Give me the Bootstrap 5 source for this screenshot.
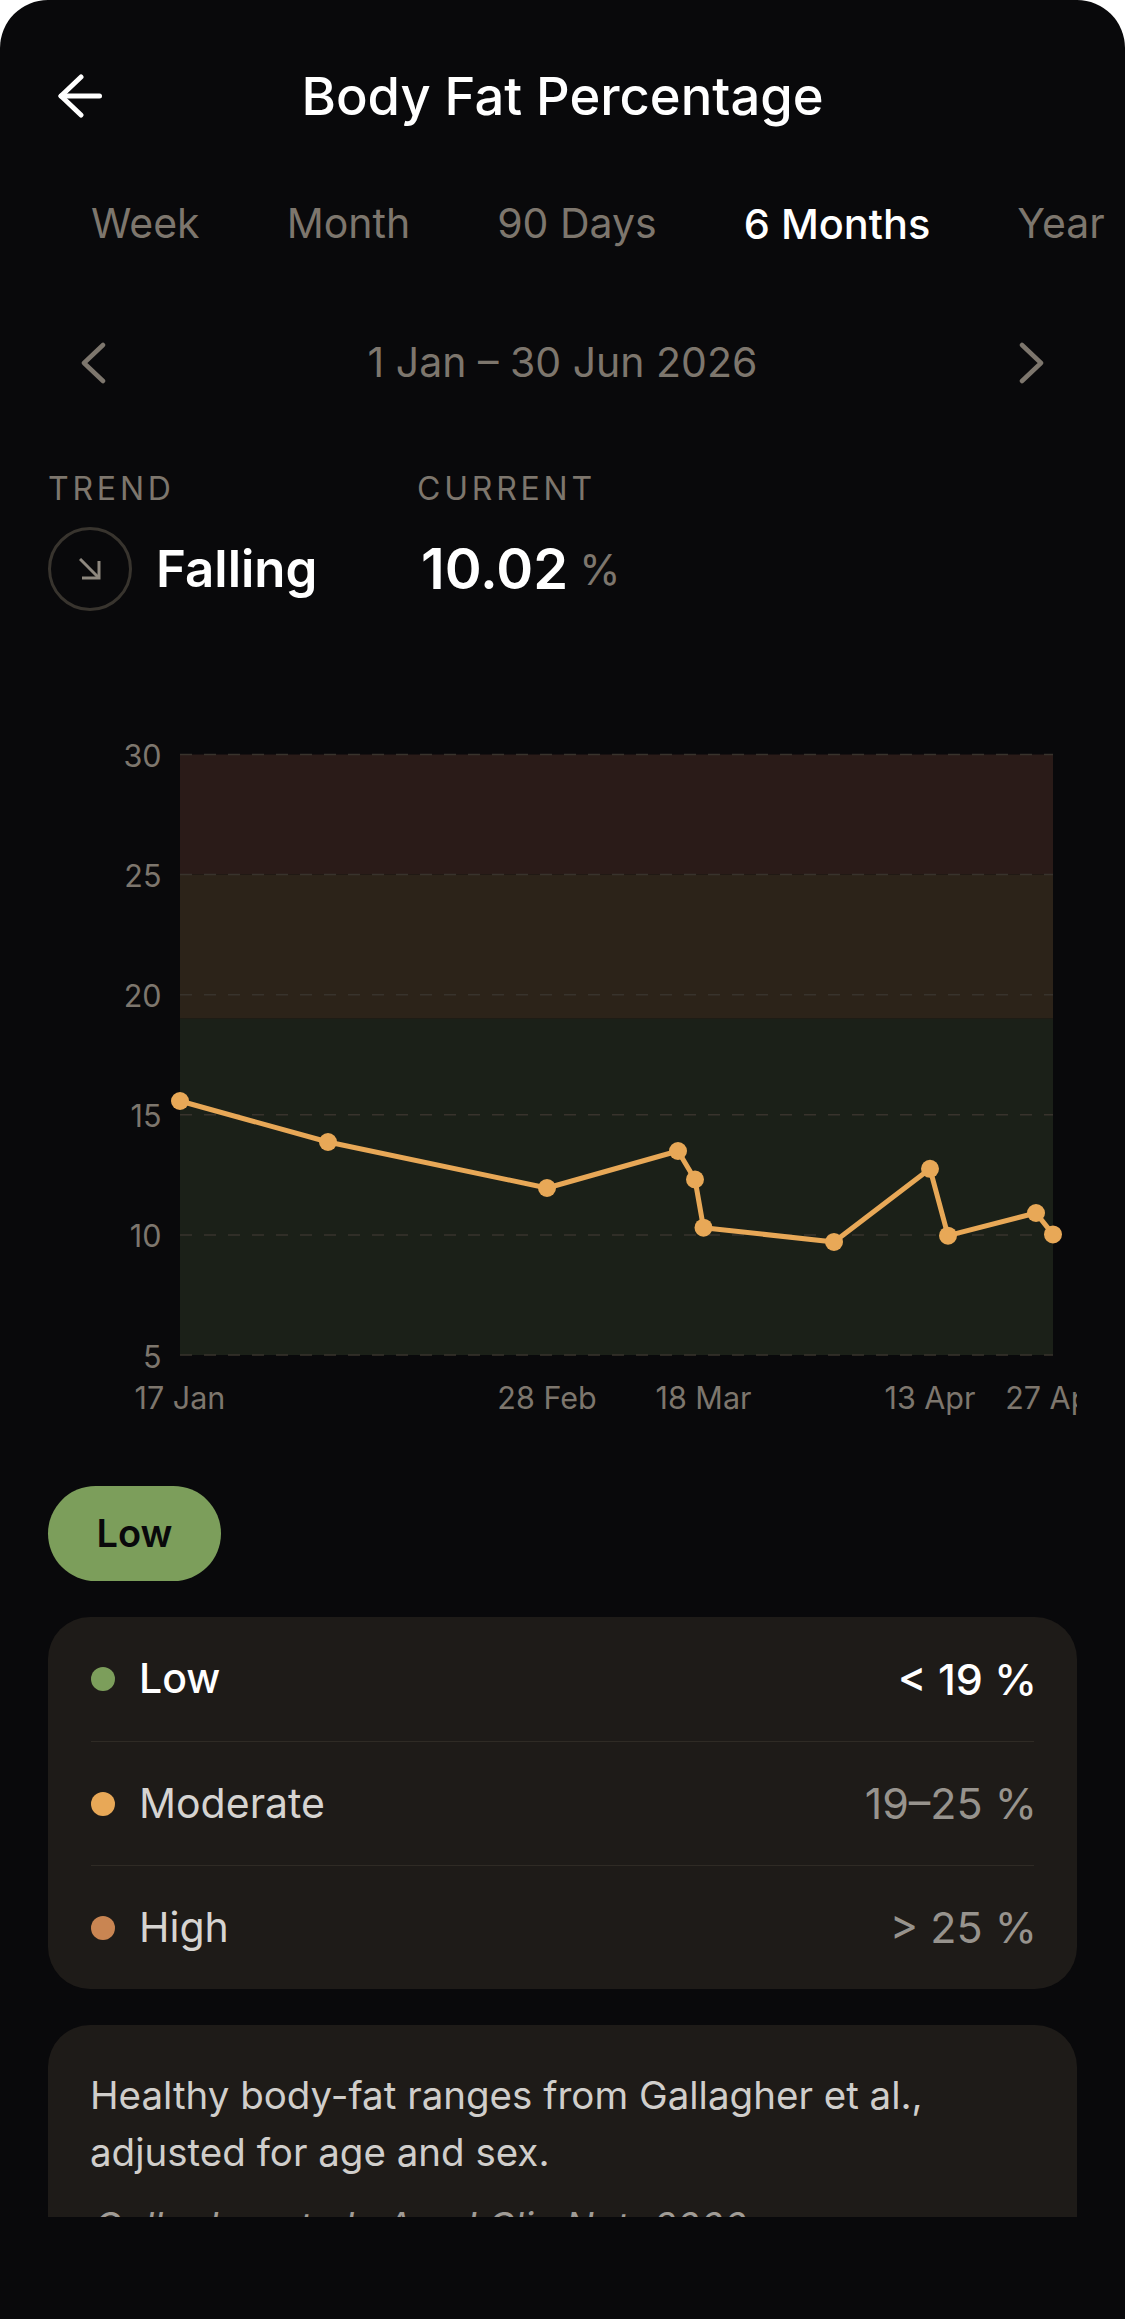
<!DOCTYPE html>
<html lang="en">
<head>
    <meta charset="UTF-8">
    <meta name="viewport" content="width=device-width, initial-scale=1.0">
    <title>Body Fat Percentage</title>
    <link href="https://cdn.jsdelivr.net/npm/bootstrap@5.3.0/dist/css/bootstrap.min.css" rel="stylesheet">
    <style>
        html {
            height: 100%;
            background-color: #fff;
        }
        body {
            height: 100%;
            background-color: #09090b;
            border-radius: 48px 48px 0 0;
            font-family: "Inter", "Liberation Sans", sans-serif;
            color: #fff;
        }
        .screen {
            height: 2217px;
            overflow: hidden;
            padding: 0 48px;
        }
        .top-bar {
            height: 192px;
        }
        .back-btn {
            left: 10px;
            top: 50%;
            transform: translateY(-50%);
            line-height: 0;
        }
        .page-title {
            font-size: 52.5px;
            font-weight: 500;
            margin: 0;
        }
        .range-tabs {
            margin: 0 -48px;
            padding-left: 91px;
            gap: 87px;
            height: 64px;
            white-space: nowrap;
            overflow: hidden;
            font-size: 41px;
            color: #7d766d;
        }
        .range-tabs .active-tab {
            color: #fff;
            font-size: 41.5px;
            font-weight: 500;
        }
        .date-row {
            height: 64px;
            margin-top: 75px;
            padding: 0 32px;
            font-size: 41px;
            color: #7d766d;
        }
        .stat-row {
            margin-top: 75px;
        }
        .stat-label {
            font-size: 32px;
            letter-spacing: 3.8px;
            color: #7d766d;
            line-height: 38px;
        }
        .trend-col {
            width: 369px;
        }
        .stat-body {
            height: 84px;
            margin-top: 19px;
        }
        .trend-ring {
            width: 84px;
            height: 84px;
            border: 3px solid #38342e;
            border-radius: 50%;
        }
        .stat-value {
            font-size: 51px;
            font-weight: 600;
        }
        .stat-number {
            font-size: 56px;
            font-weight: 600;
        }
        .stat-unit {
            font-size: 42px;
            color: #7d766d;
            margin-left: 11px;
        }
        .chart-wrap {
            margin-top: 120px;
            margin-bottom: 55px;
        }
        .chart-wrap svg {
            display: block;
        }
        .chart-wrap text {
            font-family: "Inter", "Liberation Sans", sans-serif;
            font-size: 30.5px;
            fill: #7d766d;
        }
        .level-pill {
            width: 173px;
            height: 95px;
            background-color: #7c9e5b;
            color: #09090b;
            font-size: 38px;
            font-weight: 600;
            border-radius: 48px;
        }
        .info-panel {
            background-color: #1e1b18;
            border-radius: 42px;
        }
        .range-list {
            margin-top: 36px;
            padding: 0 43px;
        }
        .range-row {
            height: 124px;
            font-size: 41px;
            color: #d6d4d1;
        }
        .range-row + .range-row {
            border-top: 1px solid #2f2b25;
        }
        .range-row .range-val {
            color: #97938d;
            font-size: 43px;
            margin-right: -3px;
        }
        .range-row.on,
        .range-row.on .range-val {
            color: #fff;
            font-weight: 500;
        }
        .dot {
            width: 24px;
            height: 24px;
            border-radius: 50%;
            margin-right: 24px;
        }
        .dot-low { background-color: #7c9e5b; }
        .dot-moderate { background-color: #e8a857; }
        .dot-high { background-color: #c98552; }
        .note-panel {
            margin-top: 36px;
            padding: 42px 43px 45px 42px;
            font-size: 38.5px;
            line-height: 57px;
            color: #d0cecb;
        }
        .note-cite {
            margin: 23px 0 0 4px;
            font-size: 37.5px;
            font-style: italic;
            color: #a09c96;
            line-height: 46px;
        }
    </style>
</head>
<body>
    <div class="screen">
        <!-- Header -->
        <div class="top-bar position-relative d-flex align-items-center justify-content-center">
            <span class="back-btn position-absolute">
                <svg width="44" height="44" viewBox="0 0 44 44" fill="none" stroke="#fff" stroke-width="5" stroke-linecap="round" stroke-linejoin="round"><path d="M41.5 22H3"/><path d="M23 3 3 22 23 41"/></svg>
            </span>
            <h1 class="page-title">Body Fat Percentage</h1>
        </div>

        <!-- Range tabs -->
        <div class="range-tabs d-flex align-items-center">
            <span>Week</span>
            <span>Month</span>
            <span>90 Days</span>
            <span class="active-tab">6 Months</span>
            <span>Year</span>
        </div>

        <!-- Date stepper -->
        <div class="date-row d-flex align-items-center justify-content-between">
            <svg width="26" height="42" viewBox="0 0 26 42" fill="none" stroke="#7d766d" stroke-width="4.5" stroke-linecap="round" stroke-linejoin="round"><path d="M23 3 4 21l19 18"/></svg>
            <span>1 Jan – 30 Jun 2026</span>
            <svg width="26" height="42" viewBox="0 0 26 42" fill="none" stroke="#7d766d" stroke-width="4.5" stroke-linecap="round" stroke-linejoin="round"><path d="m3 3 19 18L3 39"/></svg>
        </div>

        <!-- Trend and current value -->
        <div class="stat-row d-flex">
            <div class="trend-col">
                <div class="stat-label">TREND</div>
                <div class="stat-body d-flex align-items-center gap-4">
                    <div class="trend-ring d-flex align-items-center justify-content-center">
                        <svg width="22" height="22" viewBox="0 0 22 22" fill="none" stroke="#8e887f" stroke-width="3"><path d="M1 1 19 19"/><path d="M20 3v17H3"/></svg>
                    </div>
                    <span class="stat-value">Falling</span>
                </div>
            </div>
            <div>
                <div class="stat-label">CURRENT</div>
                <div class="stat-body d-flex align-items-center ms-1">
                    <span class="stat-number">10.02</span><span class="stat-unit">%</span>
                </div>
            </div>
        </div>

        <!-- Chart -->
        <div class="chart-wrap">
            <svg id="chart" width="1029" height="700" viewBox="48 730 1029 700"></svg>
        </div>

        <div class="level-pill d-flex align-items-center justify-content-center">Low</div>

        <!-- Ranges -->
        <div class="info-panel range-list">
            <div class="range-row on d-flex align-items-center">
                <span class="dot dot-low"></span>
                <span class="flex-grow-1">Low</span>
                <span class="range-val">&lt; 19 %</span>
            </div>
            <div class="range-row d-flex align-items-center">
                <span class="dot dot-moderate"></span>
                <span class="flex-grow-1">Moderate</span>
                <span class="range-val">19–25 %</span>
            </div>
            <div class="range-row d-flex align-items-center">
                <span class="dot dot-high"></span>
                <span class="flex-grow-1">High</span>
                <span class="range-val">&gt; 25 %</span>
            </div>
        </div>

        <!-- Source note, cut off by the bottom bar -->
        <div class="info-panel note-panel">
            Healthy body-fat ranges from Gallagher et al.,<br>adjusted for age and sex.
            <p class="note-cite">Gallagher et al., Am J Clin Nutr 2000</p>
        </div>
    </div>

    <script src="https://cdn.jsdelivr.net/npm/bootstrap@5.3.0/dist/js/bootstrap.bundle.min.js"></script>
    <script>
        // Chart coordinates are in page pixels, the svg viewBox starts at 48,730
        const left = 180, right = 1053;
        const yFor = v => 753.5 + (30 - v) * 24.02;
        const points = [[180,1100],[328,1141],[547,1187],[678,1150],[695,1178.5],[703.5,1226.7],[834,1241],[930,1167.8],[948,1234.7],[1036,1212],[1053,1233.4]];
        const xLabels = [[180,'17 Jan'],[547,'28 Feb'],[703.5,'18 Mar'],[930,'13 Apr'],[1053,'27 Apr']];

        let svg = '';
        const band = (from, to, colour) => {
            svg += `<rect x="${left}" y="${yFor(from)}" width="${right - left}" height="${yFor(to) - yFor(from)}" fill="${colour}"/>`;
        };
        band(30, 25, '#2a1b18');
        band(25, 19, '#2c2319');
        band(19, 5, '#1b2018');

        [30, 25, 20, 15, 10, 5].forEach(v => {
            const y = yFor(v);
            svg += `<line x1="${left}" x2="${right}" y1="${y}" y2="${y}" stroke="#38332c" stroke-width="1.5" stroke-dasharray="12 12"/>`;
            svg += `<text x="161.5" y="${y + 12.5}" text-anchor="end">${v}</text>`;
        });

        svg += `<polyline points="${points.map(p => p.join(',')).join(' ')}" fill="none" stroke="#e8a857" stroke-width="5" stroke-linejoin="round"/>`;
        points.forEach(p => {
            svg += `<circle cx="${p[0]}" cy="${p[1]}" r="9" fill="#e8a857"/>`;
        });
        xLabels.forEach(l => {
            svg += `<text x="${l[0]}" y="1408" text-anchor="middle">${l[1]}</text>`;
        });
        document.getElementById('chart').innerHTML = svg;
    </script>
</body>
</html>
